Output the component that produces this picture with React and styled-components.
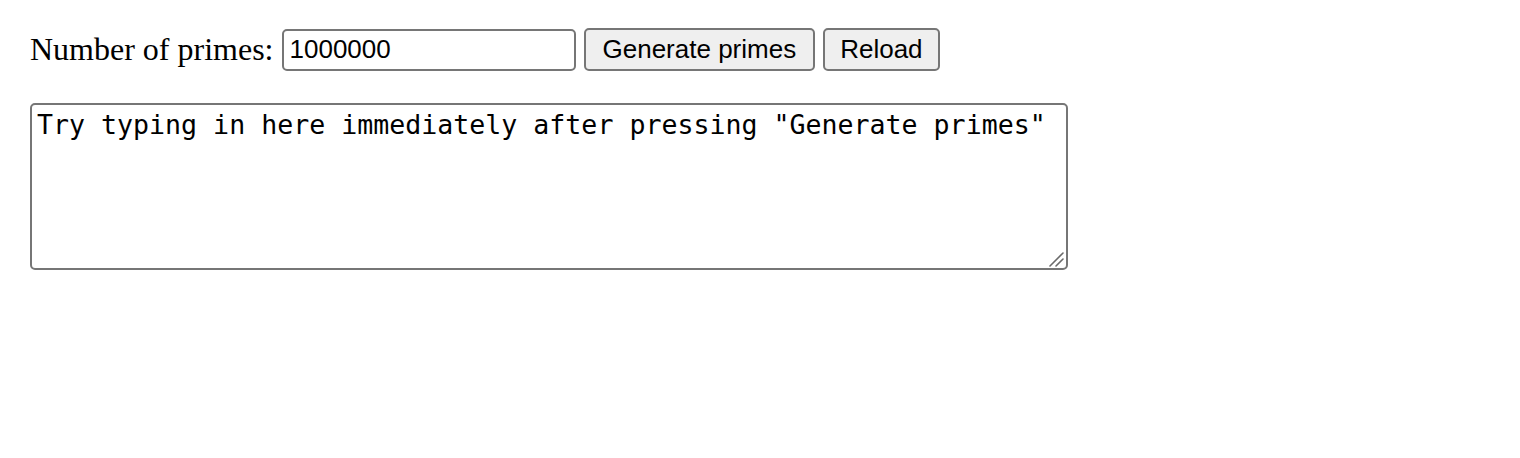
import React from "react";
import styled, { createGlobalStyle } from "styled-components";

const GlobalStyle = createGlobalStyle`
  body {
    margin: 0;
    background: #fff;
    font-family: "Liberation Serif", "Times New Roman", serif;
  }
`;

const Page = styled("div")`
  padding: 28px 30px;
  display: flex;
  flex-direction: column;
  align-items: flex-start;
  gap: 32px;
`;

const Row = styled("div")`
  display: flex;
  align-items: center;
  gap: 8px;
`;

const Label = styled("label")`
  font-size: 32px;
  color: #000;
`;

const NumberInput = styled("input")`
  box-sizing: border-box;
  width: 294px;
  height: 42px;
  padding: 0 6px;
  font-family: "Liberation Sans", Arial, sans-serif;
  font-size: 26px;
  color: #000;
  border: 2px solid #767676;
  border-radius: 5px;
  outline: none;
`;

const Button = styled("button")`
  box-sizing: border-box;
  height: 43px;
  padding: 0 ${(p) => p.$pad || 16}px;
  font-family: "Liberation Sans", Arial, sans-serif;
  font-size: 26px;
  color: #000;
  background: #efefef;
  border: 2px solid #767676;
  border-radius: 5px;
`;

const NotesBox = styled("div")`
  position: relative;
  display: flex;
`;

const Notes = styled("textarea")`
  box-sizing: border-box;
  width: 1038px;
  height: 167px;
  padding: 4px 5px;
  font-family: "DejaVu Sans Mono", monospace;
  font-size: 26.6px;
  color: #000;
  border: 2px solid #767676;
  border-radius: 5px;
  outline: none;
  resize: none;
`;

// the 2x resize grip in the corner
const Grip = styled("svg")`
  position: absolute;
  right: 2px;
  bottom: 2px;
  width: 18px;
  height: 18px;
  pointer-events: none;
`;

function App() {
  return (
    <Page>
      <GlobalStyle />
      <Row>
        <Label htmlFor="count">Number of primes:</Label>
        <NumberInput id="count" defaultValue="1000000" />
        <Button type="button" $pad={17}>Generate primes</Button>
        <Button type="button" $pad={15}>Reload</Button>
      </Row>
      <NotesBox>
        <Notes defaultValue={'Try typing in here immediately after pressing "Generate primes"'} />
        <Grip viewBox="0 0 18 18">
          <path d="M15 3 L2 16 M15 9 L8 16" stroke="#6a6a6a" strokeWidth="1.6" strokeLinecap="round" />
        </Grip>
      </NotesBox>
    </Page>
  );
}

export default App;
